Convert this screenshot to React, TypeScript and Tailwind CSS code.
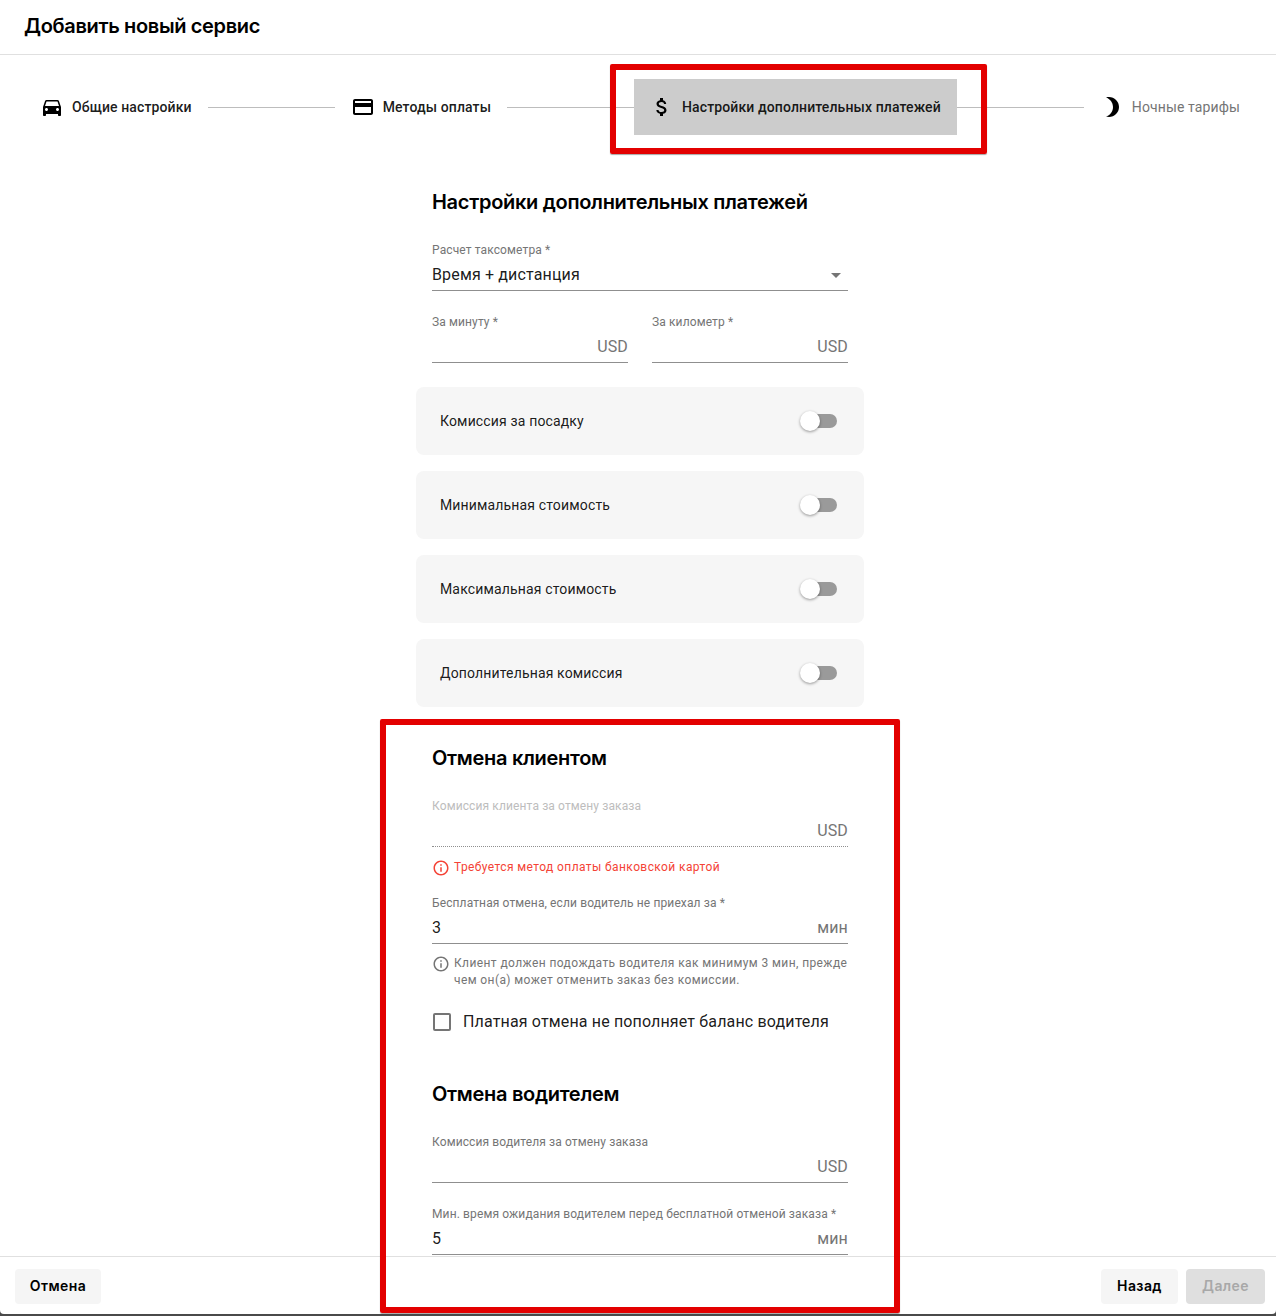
import React from "react";
import {
  MdAttachMoney,
  MdBrightness3,
  MdCreditCard,
  MdDirectionsCar,
  MdInfoOutline,
} from "react-icons/md";

const headingFont = "font-['Inter',sans-serif]";

function Step({
  icon,
  label,
  active,
  muted,
}: {
  icon: React.ReactNode;
  label: string;
  active?: boolean;
  muted?: boolean;
}) {
  return (
    <div
      className={`flex h-14 shrink-0 items-center gap-2 px-4 ${active ? "bg-[#cccccc]" : ""}`}
    >
      <span className="flex h-6 w-6 items-center justify-center text-black">{icon}</span>
      <span
        className={`text-sm tracking-[0.12px] ${muted ? "font-normal text-[#757575]" : "font-medium text-black/90"}`}
      >
        {label}
      </span>
    </div>
  );
}

function Field({
  label,
  value,
  unit,
  disabled,
  required,
}: {
  label: string;
  value?: string;
  unit?: string;
  disabled?: boolean;
  required?: boolean;
}) {
  return (
    <div
      className={`h-[49px] border-b border-[#8f8f8f] ${disabled ? "border-dotted" : ""}`}
    >
      <div
        className={`h-4 whitespace-nowrap text-xs leading-4 tracking-[0.12px] ${disabled ? "text-[#bdbdbd]" : "text-[#757575]"}`}
      >
        {label}
        {required && " *"}
      </div>
      <div className="flex h-8 items-center justify-between pt-[2px] text-base leading-6 tracking-[0.15px]">
        <span className="text-black/90">{value}</span>
        <span className="text-[#757575]">{unit}</span>
      </div>
    </div>
  );
}

function ToggleCard({ label }: { label: string }) {
  return (
    <div className="flex h-[68px] items-center justify-between rounded-lg bg-[#f6f6f6] pl-6 pr-[27px]">
      <span className="text-sm font-normal tracking-[0.15px] text-black/90">{label}</span>
      <div className="relative h-[14px] w-[34px] rounded-full bg-[#9a9a9a]">
        <div className="absolute -left-[3px] -top-[3px] h-5 w-5 rounded-full bg-white shadow-[0_1px_3px_rgba(0,0,0,0.4)]" />
      </div>
    </div>
  );
}

function Note({ text, error }: { text: React.ReactNode; error?: boolean }) {
  return (
    <div
      className={`flex gap-1 text-xs leading-[17px] tracking-[0.4px] ${error ? "text-[#f44336]" : "text-[#757575]"}`}
    >
      <MdInfoOutline className="h-[18px] w-[18px] shrink-0" />
      <div>{text}</div>
    </div>
  );
}

function SectionTitle({ children }: { children: React.ReactNode }) {
  return (
    <h2 className={`${headingFont} h-7 text-xl font-semibold leading-7 tracking-[-0.3px] text-black`}>
      {children}
    </h2>
  );
}

function FooterButton({
  children,
  disabled,
  width,
}: {
  children: React.ReactNode;
  disabled?: boolean;
  width: string;
}) {
  return (
    <button
      className={`${headingFont} ${width} h-[35px] rounded text-sm font-semibold tracking-[0.4px] ${disabled ? "bg-[#dfdfdf] text-[#a8a8a8]" : "bg-[#f5f5f5] text-black"}`}
    >
      {children}
    </button>
  );
}

export default function App() {
  return (
    <div className="relative h-[1316px] w-[1276px] overflow-hidden bg-[#4a4a4a] font-['Roboto',sans-serif]">
      <div className="flex h-[1314px] flex-col rounded-b bg-white">
        {/* Header */}
        <div className="flex h-[55px] shrink-0 items-center border-b border-[#e0e0e0] pb-[2px] pl-6">
          <h1 className={`${headingFont} text-xl font-semibold tracking-[-0.35px] text-black`}>
            Добавить новый сервис
          </h1>
        </div>

        {/* Body */}
        <div className="min-h-0 flex-1 overflow-hidden">
          {/* Stepper */}
          <div className="flex items-center pl-6 pr-5 pt-6">
            <Step icon={<MdDirectionsCar size={24} />} label="Общие настройки" />
            <div className="h-px flex-1 bg-[#bdbdbd]" />
            <Step icon={<MdCreditCard size={24} />} label="Методы оплаты" />
            <div className="h-px flex-1 bg-[#bdbdbd]" />
            <Step icon={<MdAttachMoney size={24} />} label="Настройки дополнительных платежей" active />
            <div className="h-px flex-1 bg-[#bdbdbd]" />
            <Step icon={<MdBrightness3 size={24} />} label="Ночные тарифы" muted />
          </div>

          {/* Form */}
          <div className="ml-[416px] mt-[53px] w-[448px]">
            <div className="px-4">
              <SectionTitle>Настройки дополнительных платежей</SectionTitle>
              <div className="relative mt-[26px]">
                <Field label="Расчет таксометра" value="Время + дистанция" required />
                <div className="absolute right-[7px] top-[31px] h-0 w-0 border-x-[5px] border-t-[5px] border-x-transparent border-t-[#757575]" />
              </div>
              <div className="mt-[23px] grid grid-cols-2 gap-6">
                <Field label="За минуту" unit="USD" required />
                <Field label="За километр" unit="USD" required />
              </div>
            </div>

            <div className="mt-6 flex flex-col gap-4">
              <ToggleCard label="Комиссия за посадку" />
              <ToggleCard label="Минимальная стоимость" />
              <ToggleCard label="Максимальная стоимость" />
              <ToggleCard label="Дополнительная комиссия" />
            </div>

            <div className="mt-[37px] px-4">
              <SectionTitle>Отмена клиентом</SectionTitle>
              <div className="mt-[26px]">
                <Field label="Комиссия клиента за отмену заказа" unit="USD" disabled />
              </div>
              <div className="mt-[12px]">
                <Note text="Требуется метод оплаты банковской картой" error />
              </div>
              <div className="mt-[18px]">
                <Field label="Бесплатная отмена, если водитель не приехал за" value="3" unit="мин" required />
              </div>
              <div className="mt-[11px]">
                <Note text="Клиент должен подождать водителя как минимум 3 мин, прежде чем он(а) может отменить заказ без комиссии." />
              </div>
              <div className="mt-[24px] flex h-[18px] items-center gap-3 pl-px">
                <div className="h-[18px] w-[18px] shrink-0 rounded-[2px] border-2 border-[#757575]" />
                <span className="text-base tracking-[0.15px] text-black/90">
                  Платная отмена не пополняет баланс водителя
                </span>
              </div>

              <div className="mt-[49px]">
                <SectionTitle>Отмена водителем</SectionTitle>
              </div>
              <div className="mt-[26px]">
                <Field label="Комиссия водителя за отмену заказа" unit="USD" />
              </div>
              <div className="mt-[23px]">
                <Field label="Мин. время ожидания водителем перед бесплатной отменой заказа" value="5" unit="мин" required />
              </div>
            </div>
          </div>
        </div>

        {/* Footer */}
        <div className="flex h-[58px] shrink-0 items-center justify-between border-t border-[#e0e0e0] pl-[15px] pr-[11px] pt-px">
          <FooterButton width="w-[86px]">Отмена</FooterButton>
          <div className="flex gap-2">
            <FooterButton width="w-[77px]">Назад</FooterButton>
            <FooterButton width="w-[79px]" disabled>
              Далее
            </FooterButton>
          </div>
        </div>
      </div>

      {/* Red annotation frames drawn on top of the screenshot */}
      <div className="pointer-events-none absolute left-[610px] top-[64px] h-[90px] w-[377px] rounded-[2px] border-[6px] border-[#e30000] shadow-[0_1px_1px_rgba(0,0,0,0.35)]" />
      <div className="pointer-events-none absolute left-[380px] top-[719px] h-[594px] w-[520px] rounded-[2px] border-[6px] border-[#e30000] shadow-[0_1px_1px_rgba(0,0,0,0.35)]" />
    </div>
  );
}
